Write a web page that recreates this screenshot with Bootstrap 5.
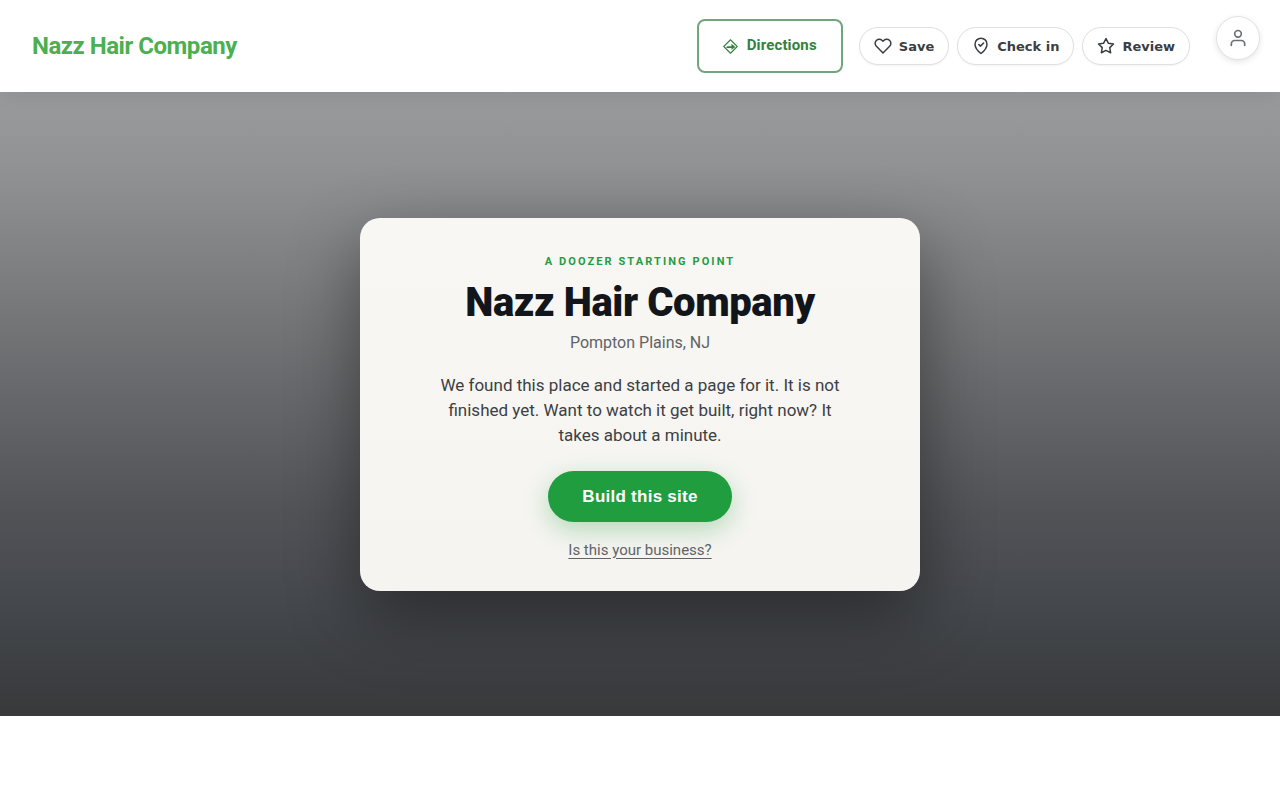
<!DOCTYPE html>
<html lang="en">
<head>
<meta charset="utf-8">
<meta name="viewport" content="width=device-width, initial-scale=1">
<title>Nazz Hair Company</title>
<link href="https://cdn.jsdelivr.net/npm/bootstrap@5.3.0/dist/css/bootstrap.min.css" rel="stylesheet">
<style>
  body { font-family: Roboto, "Liberation Sans", sans-serif; background: #fff; }
  .site-header { min-height: 92px; padding: 0 20px 0 32px; box-shadow: 0 2px 20px rgba(0,0,0,.1); z-index: 2; }
  .site-brand { font-size: 24px; line-height: 36px; font-weight: 700; letter-spacing: -.02em; color: #4caf50; text-decoration: none; }
  .directions-btn { height: 54px; padding: 0 24px; gap: 9px; border: 2px solid #71a67c; border-radius: 8px; color: #35803f; font-size: 15px; line-height: 24px; font-weight: 700; letter-spacing: .01em; text-decoration: none; }
  .directions-btn span { padding-bottom: 2px; }
  .pill-btn { height: 38px; padding: 0 14px; gap: 7px; border: 1px solid #dee0e2; border-radius: 19px; background: #fff; color: #3a3e42; font: 700 13px/20px "DejaVu Sans", sans-serif; box-shadow: 0 1px 2px rgba(0,0,0,.05); }
  .pill-btn span { padding-top: 2px; }
  .account-btn { width: 44px; height: 44px; margin-left: 26px; border: 1px solid #e0e2e4; background: #fff; color: #6b7075; box-shadow: 0 2px 6px rgba(0,0,0,.1); }
  .icon-line { fill: none; stroke: currentColor; stroke-width: 2; stroke-linecap: round; stroke-linejoin: round; flex: none; }
  .hero { min-height: 78vh; background: linear-gradient(180deg, #9a9b9c 0%, #919294 12%, #7b7c7e 31%, #67686b 48%, #515357 67%, #44474b 83%, #37393b 100%); }
  .claim-card { width: 560px; padding: 35px 32px 30px; border-radius: 20px; background: linear-gradient(180deg, #f8f7f4, #f5f4f0); box-shadow: 0 24px 70px rgba(0,0,0,.42); }
  .eyebrow { font-size: 11px; line-height: 18px; font-weight: 700; letter-spacing: .19em; color: #1f9d3f; }
  .claim-title { margin: 10px 0 6px; font-size: 40px; line-height: 44px; font-weight: 900; letter-spacing: -.01em; color: #12161a; }
  .place { font-size: 16px; line-height: 24px; color: #606367; }
  .pitch { max-width: 420px; margin: 18px auto 23px; font-size: 17px; line-height: 25px; color: #3c4043; }
  .build-btn { height: 51px; padding: 1px 34px 0; border: 0; border-radius: 26px; background: #1f9d3f; color: #fff; font: 700 17px/24px "Liberation Sans", sans-serif; letter-spacing: .015em; box-shadow: 0 8px 24px rgba(31,157,63,.3); }
  .owner-link { margin-top: 17px; font-size: 15px; line-height: 22px; color: #606367; text-underline-offset: 3px; }
</style>
</head>
<body>
<header class="site-header position-relative bg-white d-flex align-items-center justify-content-between">
  <a class="site-brand" href="#">Nazz Hair Company</a>
  <div class="d-flex align-items-center">
    <a class="directions-btn d-flex align-items-center me-3" href="#">
      <svg width="15" height="15" viewBox="0 0 14 14" fill="none" stroke="currentColor" stroke-linejoin="round" aria-hidden="true"><path d="M7 .7 13.300 7 7 13.300 .7 7Z"/><path d="M3 8.300 4 6.700H8V4.700L11.500 7.500 8 9.800V8.300Z" fill="currentColor" stroke-width=".2"/></svg>
      <span>Directions</span>
    </a>
    <div class="d-flex gap-2">
      <button class="pill-btn d-flex align-items-center" type="button">
        <svg class="icon-line" width="18" height="18" viewBox="0 0 24 24" aria-hidden="true"><path d="M20.840 4.610a5.500 5.500 0 0 0-7.780 0L12 5.670l-1.060-1.060a5.500 5.500 0 0 0-7.780 7.780L12 21.230l8.840-8.840a5.500 5.500 0 0 0 0-7.780z"/></svg>
        <span>Save</span>
      </button>
      <button class="pill-btn d-flex align-items-center" type="button">
        <svg class="icon-line" width="18" height="18" viewBox="0 0 24 24" aria-hidden="true"><path d="M12 22s8-6.500 8-12.500a8 8 0 0 0-16 0C4 15.500 12 22 12 22z"/><path d="m9 10 2.200 2.200L15.500 8"/></svg>
        <span>Check in</span>
      </button>
      <button class="pill-btn d-flex align-items-center" type="button">
        <svg class="icon-line" width="18" height="18" viewBox="0 0 24 24" aria-hidden="true"><path d="m12 2 3.090 6.260L22 9.270l-5 4.870 1.180 6.880L12 17.770l-6.180 3.250L7 14.140 2 9.270l6.910-1.010z"/></svg>
        <span>Review</span>
      </button>
    </div>
    <button class="account-btn rounded-circle p-0 d-flex align-items-center justify-content-center mb-3" type="button" aria-label="Account">
      <svg class="icon-line" width="20" height="20" viewBox="0 0 24 24" aria-hidden="true"><path d="M20 21v-2a4 4 0 0 0-4-4H8a4 4 0 0 0-4 4v2"/><circle cx="12" cy="7" r="4"/></svg>
    </button>
  </div>
</header>
<main class="hero d-flex align-items-center justify-content-center">
  <section class="claim-card mw-100 text-center d-flex flex-column align-items-center">
    <div class="eyebrow">A DOOZER STARTING POINT</div>
    <h1 class="claim-title">Nazz Hair Company</h1>
    <div class="place">Pompton Plains, NJ</div>
    <p class="pitch">We found this place and started a page for it. It is not finished yet. Want to watch it get built, right now? It takes about a minute.</p>
    <button class="build-btn" type="button">Build this site</button>
    <a class="owner-link" href="#">Is this your business?</a>
  </section>
</main>
<script src="https://cdn.jsdelivr.net/npm/bootstrap@5.3.0/dist/js/bootstrap.bundle.min.js"></script>
</body>
</html>
